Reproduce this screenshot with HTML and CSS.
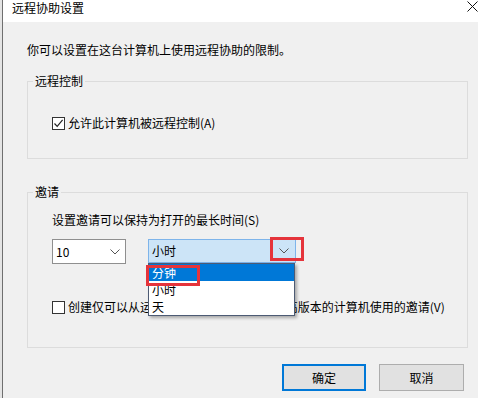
FILE: index.html
```html
<!DOCTYPE html>
<html lang="zh-CN">
<head>
<meta charset="utf-8">
<title>远程协助设置</title>
<link rel="stylesheet" href="styles.css">
</head>
<body>
<div class="frame">
  <div class="edge"></div>
  <div class="window">
    <div class="titlebar">
      <span class="title">远程协助设置</span>
      <svg class="close" width="11" height="11" viewBox="0 0 11 11"><path d="M0.5 0.5 L10.5 10.5 M10.5 0.5 L0.5 10.5" stroke="#111" stroke-width="1" fill="none"/></svg>
    </div>
    <div class="content">
      <p class="intro">你可以设置在这台计算机上使用远程协助的限制。</p>

      <div class="group g1">
        <div class="legend">远程控制</div>
        <div class="check">
          <span class="box"><svg width="11" height="11" viewBox="0 0 11 11"><path d="M1.5 5.5 L4.2 8.4 L9.6 1.8" stroke="#222" stroke-width="1.2" fill="none"/></svg></span>
          <span>允许此计算机被远程控制(A)</span>
        </div>
      </div>

      <div class="group g2">
        <div class="legend">邀请</div>
        <div class="label">设置邀请可以保持为打开的最长时间(S)</div>
        <div class="combos">
          <div class="combo c1">
            <span>10</span>
            <svg class="chev" width="10" height="6" viewBox="0 0 10 6"><path d="M0.5 0.5 L5 5 L9.5 0.5" stroke="#555" stroke-width="1" fill="none"/></svg>
          </div>
          <div class="combo-wrap">
            <div class="combo c2">
              <span>小时</span>
              <svg class="chev" width="10" height="6" viewBox="0 0 10 6"><path d="M0.5 0.5 L5 5 L9.5 0.5" stroke="#555" stroke-width="1" fill="none"/></svg>
            </div>
            <div class="dropdown">
              <div class="item selected">分钟</div>
              <div class="item">小时</div>
              <div class="item">天</div>
            </div>
            <div class="mark mark-arrow"></div>
            <div class="mark mark-item"></div>
          </div>
        </div>
        <div class="check check2">
          <span class="box"></span>
          <span>创建仅可以从运行<span class="latin"> Windows Vista </span>或更高版本的计算机使用的邀请(V)</span>
        </div>
      </div>

      <div class="buttons">
        <div class="btn primary">确定</div>
        <div class="btn">取消</div>
      </div>
    </div>
  </div>
</div>
</body>
</html>
```

FILE: styles.css
```css
* { box-sizing: border-box; }
html, body { margin: 0; padding: 0; }
body {
  width: 478px;
  height: 398px;
  overflow: hidden;
  font-family: "Noto Sans CJK SC", "Noto Sans", sans-serif;
  font-size: 12px;
  color: #000;
  background: #f0f0f0;
}
.frame {
  display: flex;
  width: 478px;
  height: 398px;
}
.edge {
  width: 2px;
  background: #e4e4e4;
}
.window {
  flex: 1;
  display: flex;
  flex-direction: column;
  border-left: 1px solid #6f6f6f;
  background: #f0f0f0;
}
.titlebar {
  height: 22px;
  background: #fff;
  display: flex;
  align-items: flex-start;
  padding-left: 9px;
}
.title {
  line-height: 15px;
  font-size: 12px;
}
.close {
  margin-left: auto;
  margin-top: 1px;
}
.content {
  padding: 19px 10px 0 24px;
  display: flex;
  flex-direction: column;
}
.intro {
  margin: 0;
  line-height: 18px;
}
.group {
  border: 1px solid #dcdcdc;
  padding: 0 0 0 24px;
  display: flex;
  flex-direction: column;
}
.g1 {
  margin-top: 22px;
  padding-bottom: 26px;
}
.g2 {
  margin-top: 33px;
  padding-bottom: 31px;
}
.legend {
  margin: -10px 0 0 -19px;
  padding: 0 2px;
  width: fit-content;
  line-height: 18px;
  background: #f0f0f0;
}
.check {
  display: flex;
  align-items: center;
  gap: 3px;
  line-height: 18px;
  margin-top: 24px;
}
.check2 {
  margin-top: 34px;
}
.latin {
  letter-spacing: 0.8px;
}
.box {
  width: 13px;
  height: 13px;
  border: 1px solid #333;
  background: #fff;
  display: flex;
  align-items: center;
  justify-content: center;
  flex: none;
}
.label {
  margin-top: 10px;
  line-height: 18px;
}
.combos {
  margin-top: 10px;
  display: flex;
  gap: 22px;
}
.combo {
  height: 25px;
  display: flex;
  align-items: center;
  justify-content: space-between;
  line-height: 18px;
}
.c1 {
  width: 74px;
  background: #fff;
  border: 1px solid #8f8f8f;
  padding: 0 5px 0 3px;
}
.combo-wrap {
  position: relative;
  width: 148px;
}
.c2 {
  width: 148px;
  height: 24px;
  background: #cce4f7;
  border: 1px solid #7eb4ea;
  padding: 0 6px 0 3px;
}
.dropdown {
  position: absolute;
  left: 0;
  top: 24px;
  width: 147px;
  background: #fff;
  border: 1px solid #4d5b74;
  box-shadow: 2px 2px 3px rgba(0, 0, 0, 0.3);
  z-index: 2;
}
.item {
  height: 17px;
  line-height: 17px;
  padding-left: 3px;
}
.item.selected {
  background: #0078d7;
  color: #fff;
}
.mark {
  position: absolute;
  border: 3px solid #e5343b;
  z-index: 3;
}
.mark-arrow {
  left: 122px;
  top: -2px;
  width: 34px;
  height: 24px;
}
.mark-item {
  left: -2px;
  top: 26px;
  width: 54px;
  height: 21px;
}
.buttons {
  margin-top: 16px;
  margin-right: 4px;
  display: flex;
  justify-content: flex-end;
  gap: 13px;
}
.btn {
  width: 85px;
  height: 27px;
  background: #e1e1e1;
  border: 1px solid #adadad;
  display: flex;
  align-items: center;
  justify-content: center;
}
.btn.primary {
  width: 84px;
  border: 2px solid #0078d7;
}
```
